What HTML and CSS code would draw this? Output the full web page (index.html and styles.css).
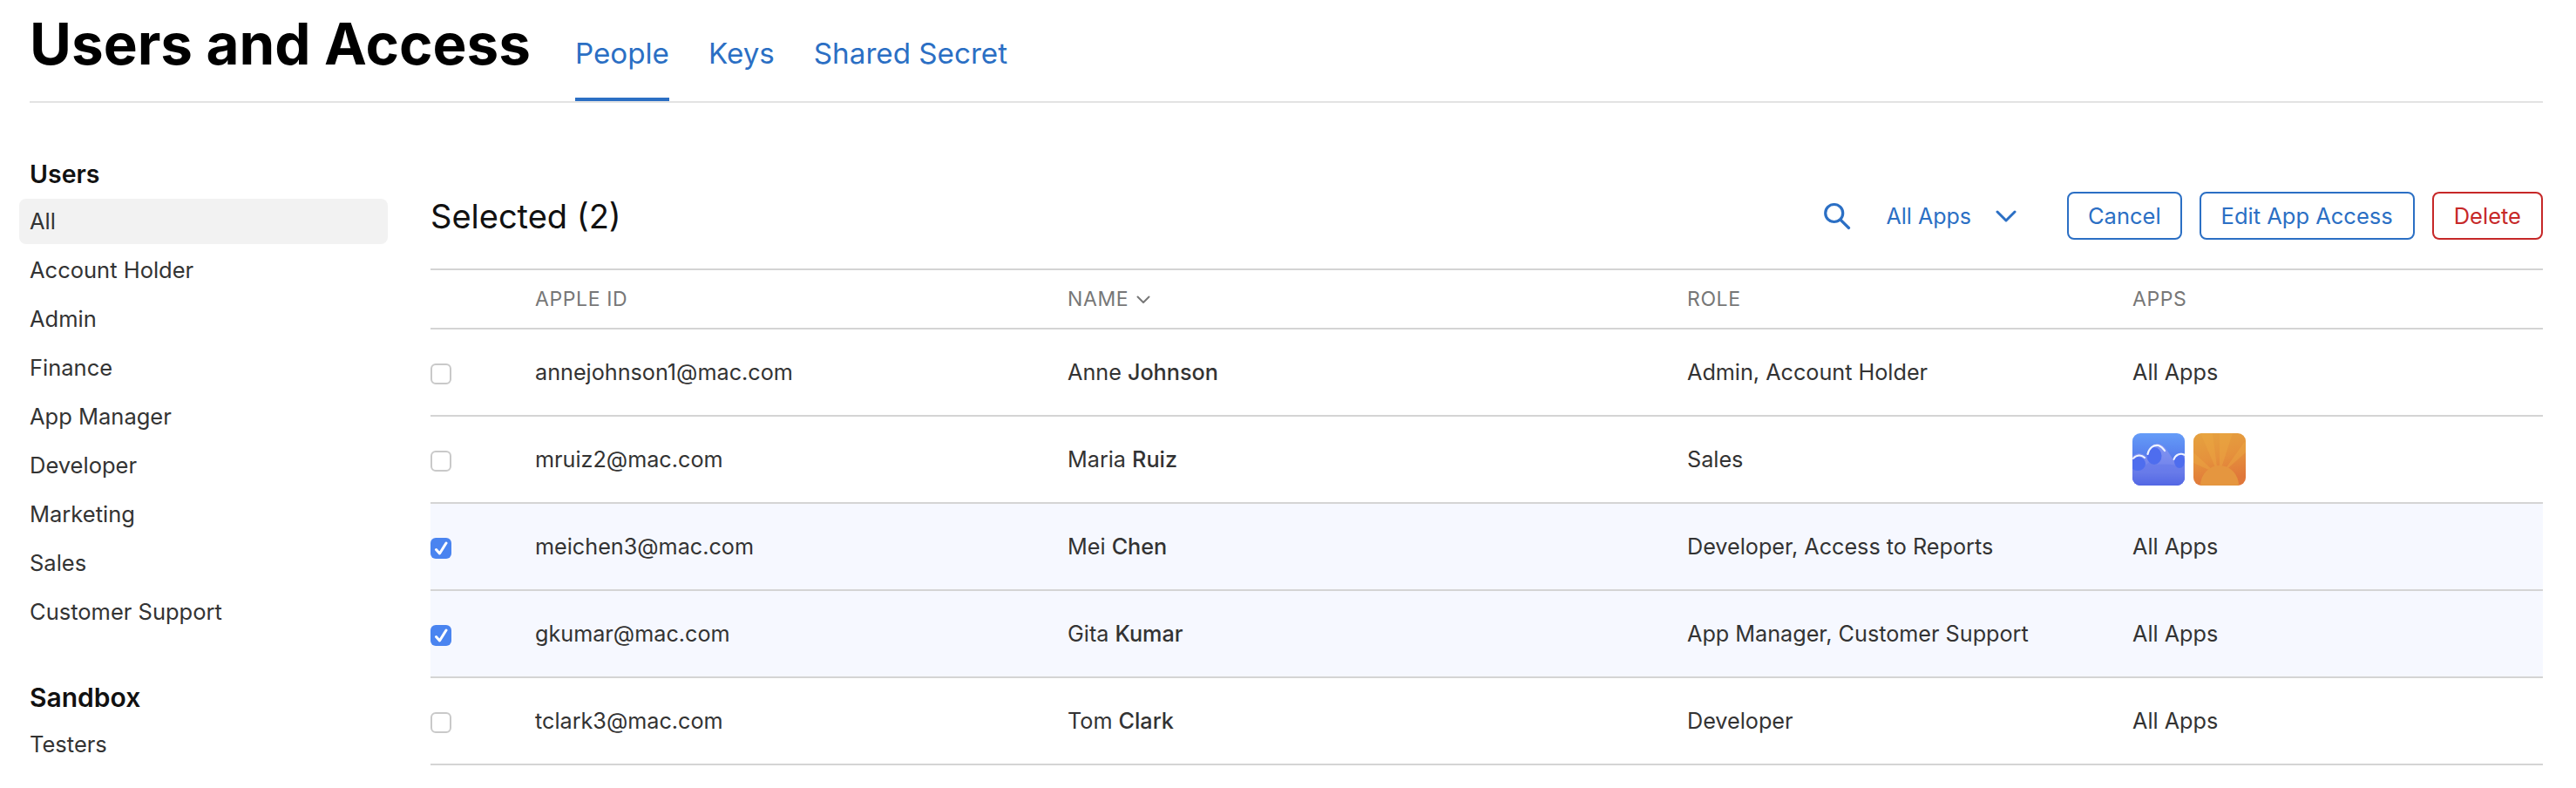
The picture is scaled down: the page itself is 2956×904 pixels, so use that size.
FILE: index.html
```html
<!DOCTYPE html>
<html lang="en">
<head>
    <meta charset="UTF-8">
    <title>Users and Access</title>
    <link rel="stylesheet" href="styles.css">
</head>
<body>

    <header class="page-header">
        <h1>Users and Access</h1>
        <nav class="tabs">
            <a class="tab active">People</a>
            <a class="tab">Keys</a>
            <a class="tab">Shared Secret</a>
        </nav>
    </header>

    <div class="layout">
        <aside class="sidebar">
            <h2>Users</h2>
            <ul>
                <li class="current">All</li>
                <li>Account Holder</li>
                <li>Admin</li>
                <li>Finance</li>
                <li>App Manager</li>
                <li>Developer</li>
                <li>Marketing</li>
                <li>Sales</li>
                <li>Customer Support</li>
            </ul>
            <h2 class="sandbox">Sandbox</h2>
            <ul>
                <li>Testers</li>
            </ul>
        </aside>

        <main class="content">
            <div class="toolbar">
                <div class="selected">Selected (2)</div>
                <svg class="search-icon" width="32" height="32" viewBox="0 0 32 32" fill="none" stroke="#2b6fc4" stroke-width="3.2" stroke-linecap="round">
                    <circle cx="12.7" cy="12.5" r="10"/>
                    <path d="M19.8 20 L29.5 29.5"/>
                </svg>
                <div class="app-filter">
                    <span>All Apps</span>
                    <svg width="24" height="14" viewBox="0 0 24 14" fill="none" stroke="#2b6fc4" stroke-width="3" stroke-linecap="round" stroke-linejoin="round">
                        <path d="M2 2 L12 12 L22 2"/>
                    </svg>
                </div>
                <button class="btn cancel">Cancel</button>
                <button class="btn">Edit App Access</button>
                <button class="btn danger">Delete</button>
            </div>

            <div class="row head">
                <div></div>
                <div>APPLE ID</div>
                <div class="sorted">NAME
                    <svg width="16" height="10" viewBox="0 0 16 10" fill="none" stroke="#777" stroke-width="2" stroke-linecap="round" stroke-linejoin="round">
                        <path d="M1.5 1.5 L8 8 L14.5 1.5"/>
                    </svg>
                </div>
                <div>ROLE</div>
                <div>APPS</div>
            </div>

            <div class="row">
                <div><span class="check"></span></div>
                <div>annejohnson1@mac.com</div>
                <div>Anne <b>Johnson</b></div>
                <div>Admin, Account Holder</div>
                <div>All Apps</div>
            </div>
            <div class="row">
                <div><span class="check"></span></div>
                <div>mruiz2@mac.com</div>
                <div>Maria <b>Ruiz</b></div>
                <div>Sales</div>
                <div class="app-icons">
                    <svg width="60" height="60" viewBox="0 0 60 60">
                        <defs>
                            <linearGradient id="wave-bg" x1="0" y1="0" x2="0" y2="1">
                                <stop offset="0" stop-color="#659cf8"/>
                                <stop offset="1" stop-color="#4559de"/>
                            </linearGradient>
                            <linearGradient id="wave-body" x1="0" y1="0" x2="0" y2="1">
                                <stop offset="0.2" stop-color="#7d90f0"/>
                                <stop offset="0.7" stop-color="#6f80ea"/>
                                <stop offset="1" stop-color="#5163e2"/>
                            </linearGradient>
                            <clipPath id="wave-clip"><rect width="60" height="60" rx="9"/></clipPath>
                        </defs>
                        <g clip-path="url(#wave-clip)">
                            <rect width="60" height="60" fill="url(#wave-bg)"/>
                            <path d="M0 27 C3 23 10 21 16 27 C17 17 24 11 30 12 C38 13 43 26 47 30 C49 24 55 20 60 24 L60 60 L0 60 Z" fill="url(#wave-body)"/>
                            <path d="M0 41 C8 41 13 38 20 33 C26 38 40 34 50 37 L60 36 L60 60 L0 60 Z" fill="#5a70e8" opacity="0.35"/>
                            <ellipse cx="25" cy="26" rx="8.5" ry="10" fill="#4e6dee"/>
                            <ellipse cx="6" cy="35" rx="9" ry="8" fill="#4e6dee"/>
                            <ellipse cx="54" cy="32" rx="6" ry="8" fill="#4e6dee"/>
                            <path d="M17.5 24 C19 17 24 13 30 14 C33 15 35 17 37 20" fill="none" stroke="#eef4ff" stroke-width="2.2" stroke-linecap="round"/>
                            <path d="M1 29 C4 25 10 24 14 28" fill="none" stroke="#eef4ff" stroke-width="2" stroke-linecap="round"/>
                            <path d="M47.5 30 C49 25 55 22 60 25" fill="none" stroke="#eef4ff" stroke-width="2" stroke-linecap="round"/>
                        </g>
                    </svg>
                    <svg width="60" height="60" viewBox="0 0 60 60">
                        <defs>
                            <linearGradient id="sun-bg" x1="0" y1="0" x2="0.25" y2="1">
                                <stop offset="0" stop-color="#e5a23f"/>
                                <stop offset="0.55" stop-color="#e5913c"/>
                                <stop offset="1" stop-color="#e0773a"/>
                            </linearGradient>
                            <clipPath id="sun-clip"><rect width="60" height="60" rx="9"/></clipPath>
                        </defs>
                        <g clip-path="url(#sun-clip)">
                            <rect x="0" y="0" width="60" height="60" fill="url(#sun-bg)"/>
                            <path d="M28 46 L8 0 L22 0 Z M30 46 L30 0 L45 0 Z M33 46 L60 8 L60 22 Z M26 46 L0 22 L0 34 Z" fill="#eaa842" opacity="0.45"/>
                            <path d="M8 60 A22 23 0 0 1 52 60 Z" fill="#e5963f"/>
                        </g>
                    </svg>
                </div>
            </div>
            <div class="row picked">
                <div>
                    <span class="check on">
                        <svg width="24" height="24" viewBox="0 0 24 24" fill="none" stroke="#fff" stroke-width="3" stroke-linecap="round" stroke-linejoin="round">
                            <path d="M6.5 13.5 L10.5 18 L18 6"/>
                        </svg>
                    </span>
                </div>
                <div>meichen3@mac.com</div>
                <div>Mei <b>Chen</b></div>
                <div>Developer, Access to Reports</div>
                <div>All Apps</div>
            </div>
            <div class="row picked">
                <div>
                    <span class="check on">
                        <svg width="24" height="24" viewBox="0 0 24 24" fill="none" stroke="#fff" stroke-width="3" stroke-linecap="round" stroke-linejoin="round">
                            <path d="M6.5 13.5 L10.5 18 L18 6"/>
                        </svg>
                    </span>
                </div>
                <div>gkumar@mac.com</div>
                <div>Gita <b>Kumar</b></div>
                <div>App Manager, Customer Support</div>
                <div>All Apps</div>
            </div>
            <div class="row">
                <div><span class="check"></span></div>
                <div>tclark3@mac.com</div>
                <div>Tom <b>Clark</b></div>
                <div>Developer</div>
                <div>All Apps</div>
            </div>
        </main>
    </div>

</body>
</html>
```

FILE: styles.css
```css
/* page */
body {
    margin: 0;
    height: 904px;
    overflow: hidden;
    background: #fff;
    color: #333;
    font-family: Inter, "Liberation Sans", sans-serif;
    font-size: 25.2px;
}

/* header and tabs */
.page-header {
    display: flex;
    align-items: flex-end;
    height: 116px;
    margin: 0 38px 0 34px;
    border-bottom: 2px solid #e3e3e3;
}

h1 {
    margin: 0 51px 27px 0;
    color: #000;
    font-size: 65.5px;
    font-weight: 700;
    line-height: 76px;
}

.tabs {
    display: flex;
    gap: 45px;
}

.tab {
    padding-bottom: 28px;
    border-bottom: 4px solid transparent;
    color: #2b6fc4;
    font-size: 33.2px;
    line-height: 46px;
}

.tab.active {
    border-bottom-color: #2b6fc4;
}

/* layout */
.layout {
    display: flex;
}

.sidebar {
    flex: none;
    width: 423px;
    margin: 62px 49px 0 22px;
}

.sidebar h2 {
    margin: 0 0 8px 12px;
    color: #111;
    font-size: 28.5px;
    font-weight: 600;
    line-height: 40px;
}

.sidebar h2.sandbox {
    margin-top: 52px;
    font-size: 30px;
}

.sidebar ul {
    display: flex;
    flex-direction: column;
    gap: 4px;
    margin: 0;
    padding: 0;
    list-style: none;
}

.sidebar li {
    height: 52px;
    padding-left: 12px;
    border-radius: 8px;
    font-size: 25.5px;
    line-height: 52px;
}

.sidebar li.current {
    background: #f2f2f2;
}

/* toolbar */
.content {
    flex: 1;
    min-width: 0;
    margin-right: 38px;
}

.toolbar {
    display: flex;
    align-items: center;
    height: 55px;
    margin-top: 102px;
    padding-bottom: 33px;
}

.selected {
    flex: 1;
    color: #111;
    font-size: 38px;
}

.search-icon {
    margin-right: 41px;
}

.app-filter {
    display: flex;
    align-items: center;
    gap: 28px;
    margin-right: 58px;
    color: #2b6fc4;
    font-size: 25px;
}

.btn {
    height: 55px;
    margin-left: 20px;
    padding: 0 23px;
    border: 2px solid #2b6fc4;
    border-radius: 8px;
    background: #fff;
    color: #2b6fc4;
    font-family: inherit;
    font-size: 25.5px;
}

.btn.cancel {
    margin-left: 0;
    padding: 0 22px;
}

.btn.danger {
    border-color: #c62828;
    color: #c62828;
}

/* table */
.row {
    display: grid;
    grid-template-columns: 120px 611px 711px 511px 1fr;
    align-items: center;
    height: 98px;
    border-top: 2px solid #d4d4d4;
}

.row:last-child {
    border-bottom: 2px solid #d4d4d4;
}

.row.head {
    height: 66px;
    color: #777;
    font-size: 23px;
    letter-spacing: 0.6px;
}

.row.picked {
    background: #f6f8ff;
}

.row b {
    font-weight: 500;
}

.sorted svg {
    margin-left: 2px;
    vertical-align: 2px;
}

.app-icons {
    display: flex;
    gap: 10px;
}

/* checkboxes */
.check {
    display: block;
    box-sizing: border-box;
    width: 24px;
    height: 24px;
    margin-top: 3px;
    border: 2px solid #c9c9c9;
    border-radius: 6px;
    background: #fff;
}

.check.on {
    border: 0;
    background: #4a84f0;
}

.check svg {
    display: block;
}
```
